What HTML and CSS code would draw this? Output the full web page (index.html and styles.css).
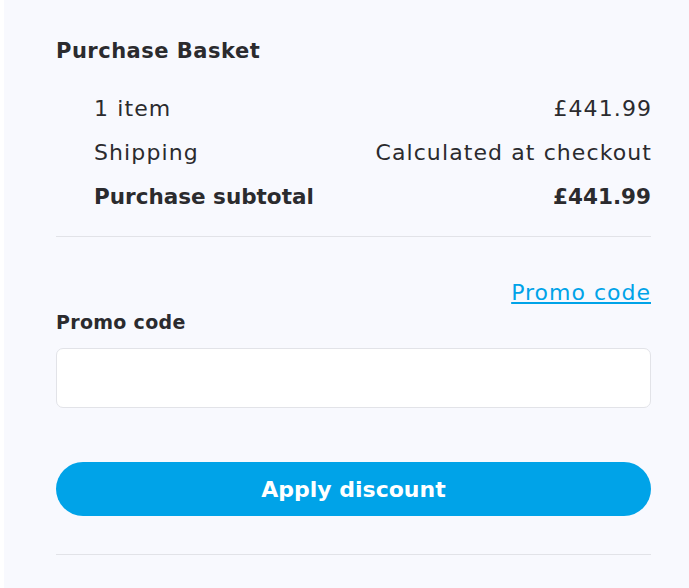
FILE: index.html
```html
<!DOCTYPE html>
<html>
<head>
<meta charset="utf-8">
<link rel="stylesheet" href="styles.css">
</head>
<body>
<div class="panel">
  <h2 class="title">Purchase Basket</h2>
  <div class="rows">
    <div class="row"><span>1 item</span><span class="val">£441.99</span></div>
    <div class="row"><span>Shipping</span><span class="val">Calculated at checkout</span></div>
    <div class="row row-total"><span>Purchase subtotal</span><span class="val">£441.99</span></div>
  </div>
  <hr class="divider">
  <div class="promo">
    <div class="promo-toggle"><a href="#" class="promo-link">Promo code</a></div>
    <label class="promo-label" for="promo">Promo code</label>
    <input id="promo" class="promo-input" type="text">
    <button class="apply-btn">Apply discount</button>
  </div>
  <hr class="divider divider-bottom">
</div>
</body>
</html>
```
FILE: styles.css
```css
html, body {
  margin: 0;
  padding: 0;
  background: #ffffff;
}
body {
  font-family: "DejaVu Sans", "Noto Sans", sans-serif;
  color: #2b2b2e;
}
.panel {
  margin-left: 4px;
  min-height: 588px;
  box-sizing: border-box;
  background: #f8f9fe;
  padding: 37px 38px 0 52px;
}
.title {
  margin: 0;
  font-size: 21px;
  font-weight: 700;
  line-height: 28px;
  letter-spacing: 0.5px;
}
.rows {
  margin-top: 22px;
  padding-left: 38px;
}
.row {
  display: flex;
  justify-content: space-between;
  font-size: 22px;
  line-height: 44px;
  letter-spacing: 1.1px;
}
.row .val {
  margin-right: -1.1px;
}
.row-total {
  font-weight: 700;
  font-size: 21.5px;
  letter-spacing: 0;
}
.row-total .val {
  margin-right: 0;
}
.divider {
  margin: 17px 0 0;
  border: 0;
  border-top: 1px solid #e2e3e8;
}
.promo {
  display: flex;
  flex-direction: column;
}
.promo-toggle {
  display: flex;
  justify-content: flex-end;
  margin-top: 41px;
}
.promo-link {
  color: #00a3e8;
  font-size: 22px;
  line-height: 30px;
  letter-spacing: 1px;
}
.promo-label {
  margin-top: -1px;
  font-size: 19px;
  font-weight: 700;
  line-height: 30px;
  letter-spacing: 0.3px;
}
.promo-input {
  margin-top: 11px;
  height: 60px;
  box-sizing: border-box;
  border: 1px solid #e2e3e8;
  border-radius: 7px;
  background: #fff;
}
.apply-btn {
  margin-top: 54px;
  height: 54px;
  border: 0;
  border-radius: 27px;
  background: #00a3e8;
  color: #fff;
  font-family: inherit;
  font-size: 22px;
  font-weight: 700;
  letter-spacing: 0;
}
.divider-bottom {
  margin-top: 38px;
}
```
